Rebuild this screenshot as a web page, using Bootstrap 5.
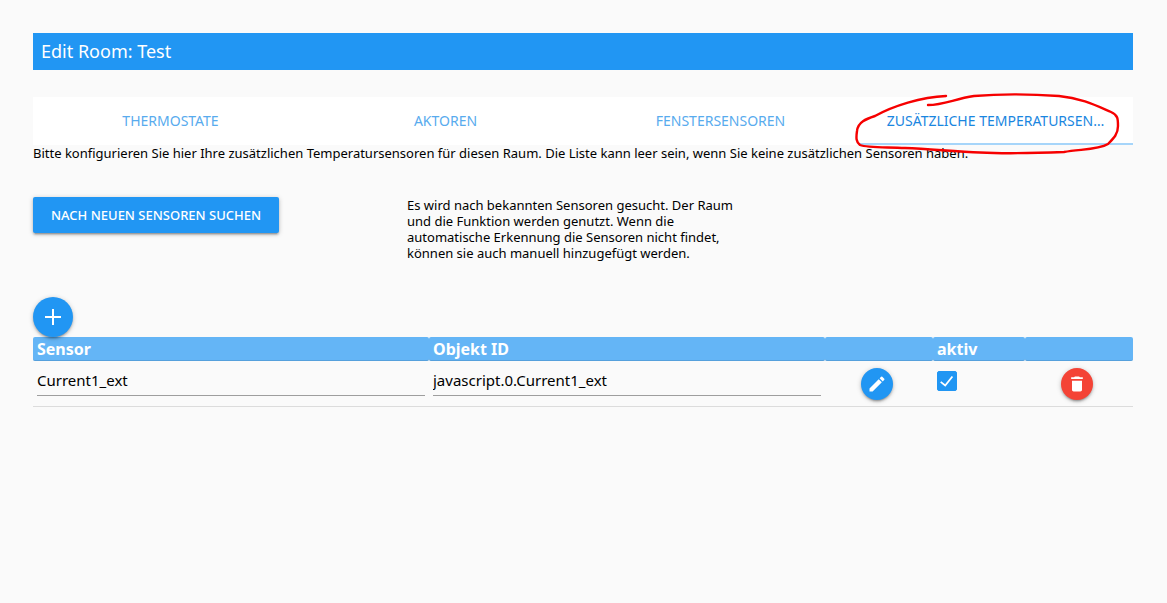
<!DOCTYPE html>
<html lang="de">
<head>
<meta charset="utf-8">
<meta name="viewport" content="width=device-width, initial-scale=1">
<title>Edit Room: Test</title>
<link href="https://cdn.jsdelivr.net/npm/bootstrap@5.3.0/dist/css/bootstrap.min.css" rel="stylesheet">
<style>
  :root { --blue: #2196f3; --soft-blue: #64b5f6; --red: #f44336; }
  body { background: #fafafa; color: #000; font: 13px/16px "Noto Sans", "Open Sans", sans-serif; }
  .page { padding: 33px 34px 0 33px; }
  .room-title { background: var(--blue); font-size: 18px; line-height: 21px; }
  .room-tabs { background: #fff; margin-top: 27px; }
  .room-tabs .nav-item { min-width: 0; }
  .room-tabs .nav-link { height: 48px; padding: 0 24px; font-size: 14px; line-height: 48px; color: #58abee; border-radius: 0; }
  .room-tabs .nav-link.active { color: #1a86e0; border-bottom: 2px solid #a6d5fa; }
  .marking { top: -5px; right: 9px; width: 272px; height: 64px; pointer-events: none; }
  .search-row { --bs-gutter-x: 22px; margin-top: 36px; }
  .raised { background: var(--blue); color: #fff; border: 0; box-shadow: 0 2px 2px rgba(0,0,0,.16), 0 3px 1px -2px rgba(0,0,0,.14), 0 1px 5px rgba(0,0,0,.22); }
  .raised:hover { background: #42a5f5; color: #fff; }
  .search-btn { height: 36px; border-radius: 2px; font-size: 13px; font-weight: 500; padding: 1px 18px 0; }
  .round-btn { width: 32px; height: 32px; margin-top: 7px; }
  .add-btn { width: 40px; height: 40px; margin-top: 36px; }
  .raised.delete-btn { background: var(--red); }
  .sensor-table { table-layout: fixed; border-collapse: separate; border-spacing: 0; }
  .sensor-table th { height: 24px; padding: 1px 4px 0; font-size: 16px; line-height: 22px; color: #fff; background: var(--soft-blue); border-bottom: 1px solid #56a0dc; border-radius: 2px; }
  .sensor-table td { height: 46px; padding: 0 4px; border-bottom: 1px solid #dcdcdc; vertical-align: top; }
  .sensor-table td.icon-cell { padding-right: 8px; }
  .w-text { width: 36%; }
  .w-icon { width: 108px; }
  .sensor-input { height: 35px; padding: 4px 0 0; border: 0; border-bottom: 1px solid #9e9e9e; border-radius: 0; background: none; color: #000; font-size: 15px; }
  .form-check-input.sensor-check { width: 20px; height: 20px; margin: 10px 0 0; border-radius: 2px; }
  .sensor-check:checked { background-color: var(--blue); border-color: var(--blue); }
  .form-check-input.sensor-check:checked { background-image: url("data:image/svg+xml,%3Csvg xmlns='http://www.w3.org/2000/svg' viewBox='0 0 20 20'%3E%3Cpath d='M3 11l5 4 8-10' fill='none' stroke='%23fff' stroke-width='2'/%3E%3C/svg%3E"); }
</style>
</head>
<body>
<main class="page container-fluid">
  <h1 class="room-title text-white fw-normal p-2 m-0">Edit Room: Test</h1>

  <div class="position-relative">
    <ul class="room-tabs nav nav-justified flex-nowrap">
      <li class="nav-item"><a class="nav-link text-truncate" href="#thermostate">THERMOSTATE</a></li>
      <li class="nav-item"><a class="nav-link text-truncate" href="#aktoren">AKTOREN</a></li>
      <li class="nav-item"><a class="nav-link text-truncate" href="#fenstersensoren">FENSTERSENSOREN</a></li>
      <li class="nav-item"><a class="nav-link text-truncate active" aria-current="page" href="#temperatursensoren">ZUSÄTZLICHE TEMPERATURSEN…</a></li>
    </ul>
    <svg class="marking position-absolute" viewBox="852 92 272 64" fill="none" stroke="#f60000" stroke-width="2.4" stroke-linecap="round" stroke-linejoin="round" aria-hidden="true">
      <path d="M946 96C921 97 893 106 875 116C866 119 858 122 857 131C856 138 856 142 860 145C868 148 886 147 905 148C932 149 957 152 980 152.500C1009 154 1038 153 1064 152C1080 149 1098 150 1108 144C1114 138 1118 134 1118 126C1118 119 1118 115 1111 112C1097 106 1081 98 1059 96C1031 94 997 94 974 96C954 99 944 105 928 105"/>
    </svg>
  </div>

  <p class="m-0">Bitte konfigurieren Sie hier Ihre zusätzlichen Temperatursensoren für diesen Raum. Die Liste kann leer sein, wenn Sie keine zusätzlichen Sensoren haben.</p>

  <div class="row search-row">
    <div class="col-4"><button type="button" class="btn raised search-btn text-nowrap">NACH NEUEN SENSOREN SUCHEN</button></div>
    <div class="col-4">Es wird nach bekannten Sensoren gesucht. Der Raum und die Funktion werden genutzt. Wenn die automatische Erkennung die Sensoren nicht findet, können sie auch manuell hinzugefügt werden.</div>
  </div>

  <button type="button" class="btn raised add-btn rounded-circle p-0 d-flex align-items-center justify-content-center position-relative z-1" aria-label="Sensor hinzufügen">
    <svg width="24" height="24" viewBox="0 0 24 24" fill="currentColor"><path d="M20 13h-7v7h-2v-7H4v-2h7V4h2v7h7z"/></svg>
  </button>

  <table class="sensor-table w-100">
    <colgroup><col class="w-text"><col class="w-text"><col class="w-icon"><col><col class="w-icon"></colgroup>
    <thead>
      <tr><th scope="col">Sensor</th><th scope="col">Objekt ID</th><th></th><th scope="col">aktiv</th><th></th></tr>
    </thead>
    <tbody>
      <tr>
        <td><input type="text" class="sensor-input w-100 d-block" value="Current1_ext" aria-label="Sensor"></td>
        <td><input type="text" class="sensor-input w-100 d-block" value="javascript.0.Current1_ext" aria-label="Objekt ID"></td>
        <td class="icon-cell">
          <button type="button" class="btn raised round-btn rounded-circle p-0 d-flex align-items-center justify-content-center mx-auto" aria-label="Bearbeiten">
            <svg width="20" height="20" viewBox="0 0 24 24" fill="currentColor"><path d="M3 17.250V21h3.750L17.810 9.940l-3.750-3.750L3 17.250zM20.710 7.040a1 1 0 0 0 0-1.410l-2.340-2.340a1 1 0 0 0-1.410 0l-1.830 1.830 3.750 3.750 1.830-1.830z"/></svg>
          </button>
        </td>
        <td><input type="checkbox" class="form-check-input sensor-check d-block" checked aria-label="aktiv"></td>
        <td class="icon-cell">
          <button type="button" class="btn raised round-btn delete-btn rounded-circle p-0 d-flex align-items-center justify-content-center mx-auto" aria-label="Löschen">
            <svg width="20" height="20" viewBox="0 0 24 24" fill="currentColor"><path d="M6 19c0 1.100.9 2 2 2h8c1.100 0 2-.9 2-2V8H6v11zM19 4h-3.500l-1-1h-5l-1 1H5v2h14V4z"/></svg>
          </button>
        </td>
      </tr>
    </tbody>
  </table>
</main>
<script src="https://cdn.jsdelivr.net/npm/bootstrap@5.3.0/dist/js/bootstrap.bundle.min.js"></script>
</body>
</html>
